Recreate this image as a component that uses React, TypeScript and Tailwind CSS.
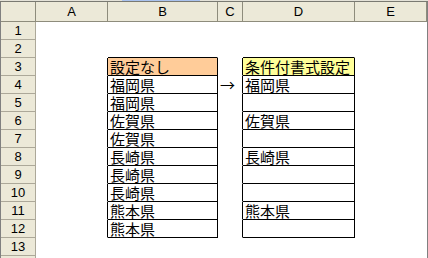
const cols = [
  { key: "A", w: "w-[72px]" },
  { key: "B", w: "w-[110px]" },
  { key: "C", w: "w-[25px]" },
  { key: "D", w: "w-[112px]" },
  { key: "E", w: "w-[72px]" },
];

const before = ["福岡県", "福岡県", "佐賀県", "佐賀県", "長崎県", "長崎県", "長崎県", "熊本県", "熊本県"];
const after = ["福岡県", "", "佐賀県", "", "長崎県", "", "", "熊本県", ""];

type Cell = { text?: string; bg?: string; right?: boolean; bottom?: boolean };

function cellFor(row: number, col: string): Cell {
  const boxed = row >= 3 && row <= 12;
  if (col === "A") return { right: boxed };
  if (col === "B") {
    if (row === 2) return { bottom: true };
    if (row === 3) return { text: "設定なし", bg: "bg-[#ffcc99]", right: true, bottom: true };
    if (boxed) return { text: before[row - 4], right: true, bottom: true };
    return {};
  }
  if (col === "C") {
    if (row === 4) return { text: "→", right: true };
    return { right: boxed };
  }
  if (col === "D") {
    if (row === 2) return { bottom: true };
    if (row === 3) return { text: "条件付書式設定", bg: "bg-[#ffff99]", right: true, bottom: true };
    if (boxed) return { text: after[row - 4], right: true, bottom: true };
    return {};
  }
  return {};
}

export default function App() {
  const rows = Array.from({ length: 14 }, (_, i) => i + 1);

  return (
    <div className="w-[428px] h-[258px] overflow-hidden bg-white font-['Liberation_Sans','Noto_Sans_CJK_JP',sans-serif]">
      {/* formula bar edge */}
      <div className="flex h-px">
        <div className="w-[122px] bg-[#e4e2d8]" />
        <div className="w-[78px] bg-[#a9c2ee]" />
        <div className="flex-1 bg-[#e4e2d8]" />
      </div>
      <div className="h-px bg-[#7a7a72]" />
      <div className="flex w-[428px] border-l border-r border-[#808080]">
        <div className="flex flex-col">
          <div className="h-[20px] w-[35px] bg-[#ece9d8] border-r border-b border-[#8e8c7c]" />
          {rows.map((r) => (
            <div
              key={r}
              className="h-[18px] w-[35px] bg-[#ece9d8] border-r border-b border-[#aca899] flex items-center justify-center text-[13px] leading-[17px] text-black"
            >
              {r}
            </div>
          ))}
        </div>
        {cols.map((c) => (
          <div key={c.key} className="flex flex-col">
            <div className={`${c.w} h-[20px] bg-[#ece9d8] border-r border-b border-[#8e8c7c] flex items-center justify-center text-[13px] leading-[19px] text-black`}>
              {c.key}
            </div>
            {rows.map((r) => {
              const cell = cellFor(r, c.key);
              return (
                <div
                  key={r}
                  className={`${c.w} h-[18px] border-r border-b pl-[2px] text-[15px] leading-[17px] text-black font-['Noto_Sans_CJK_JP',sans-serif] whitespace-nowrap ${cell.bg ?? "bg-white"} ${cell.right ? "border-r-black" : "border-r-transparent"} ${cell.bottom ? "border-b-black" : "border-b-transparent"}`}
                >
                  {cell.text}
                </div>
              );
            })}
          </div>
        ))}
      </div>
    </div>
  );
}
